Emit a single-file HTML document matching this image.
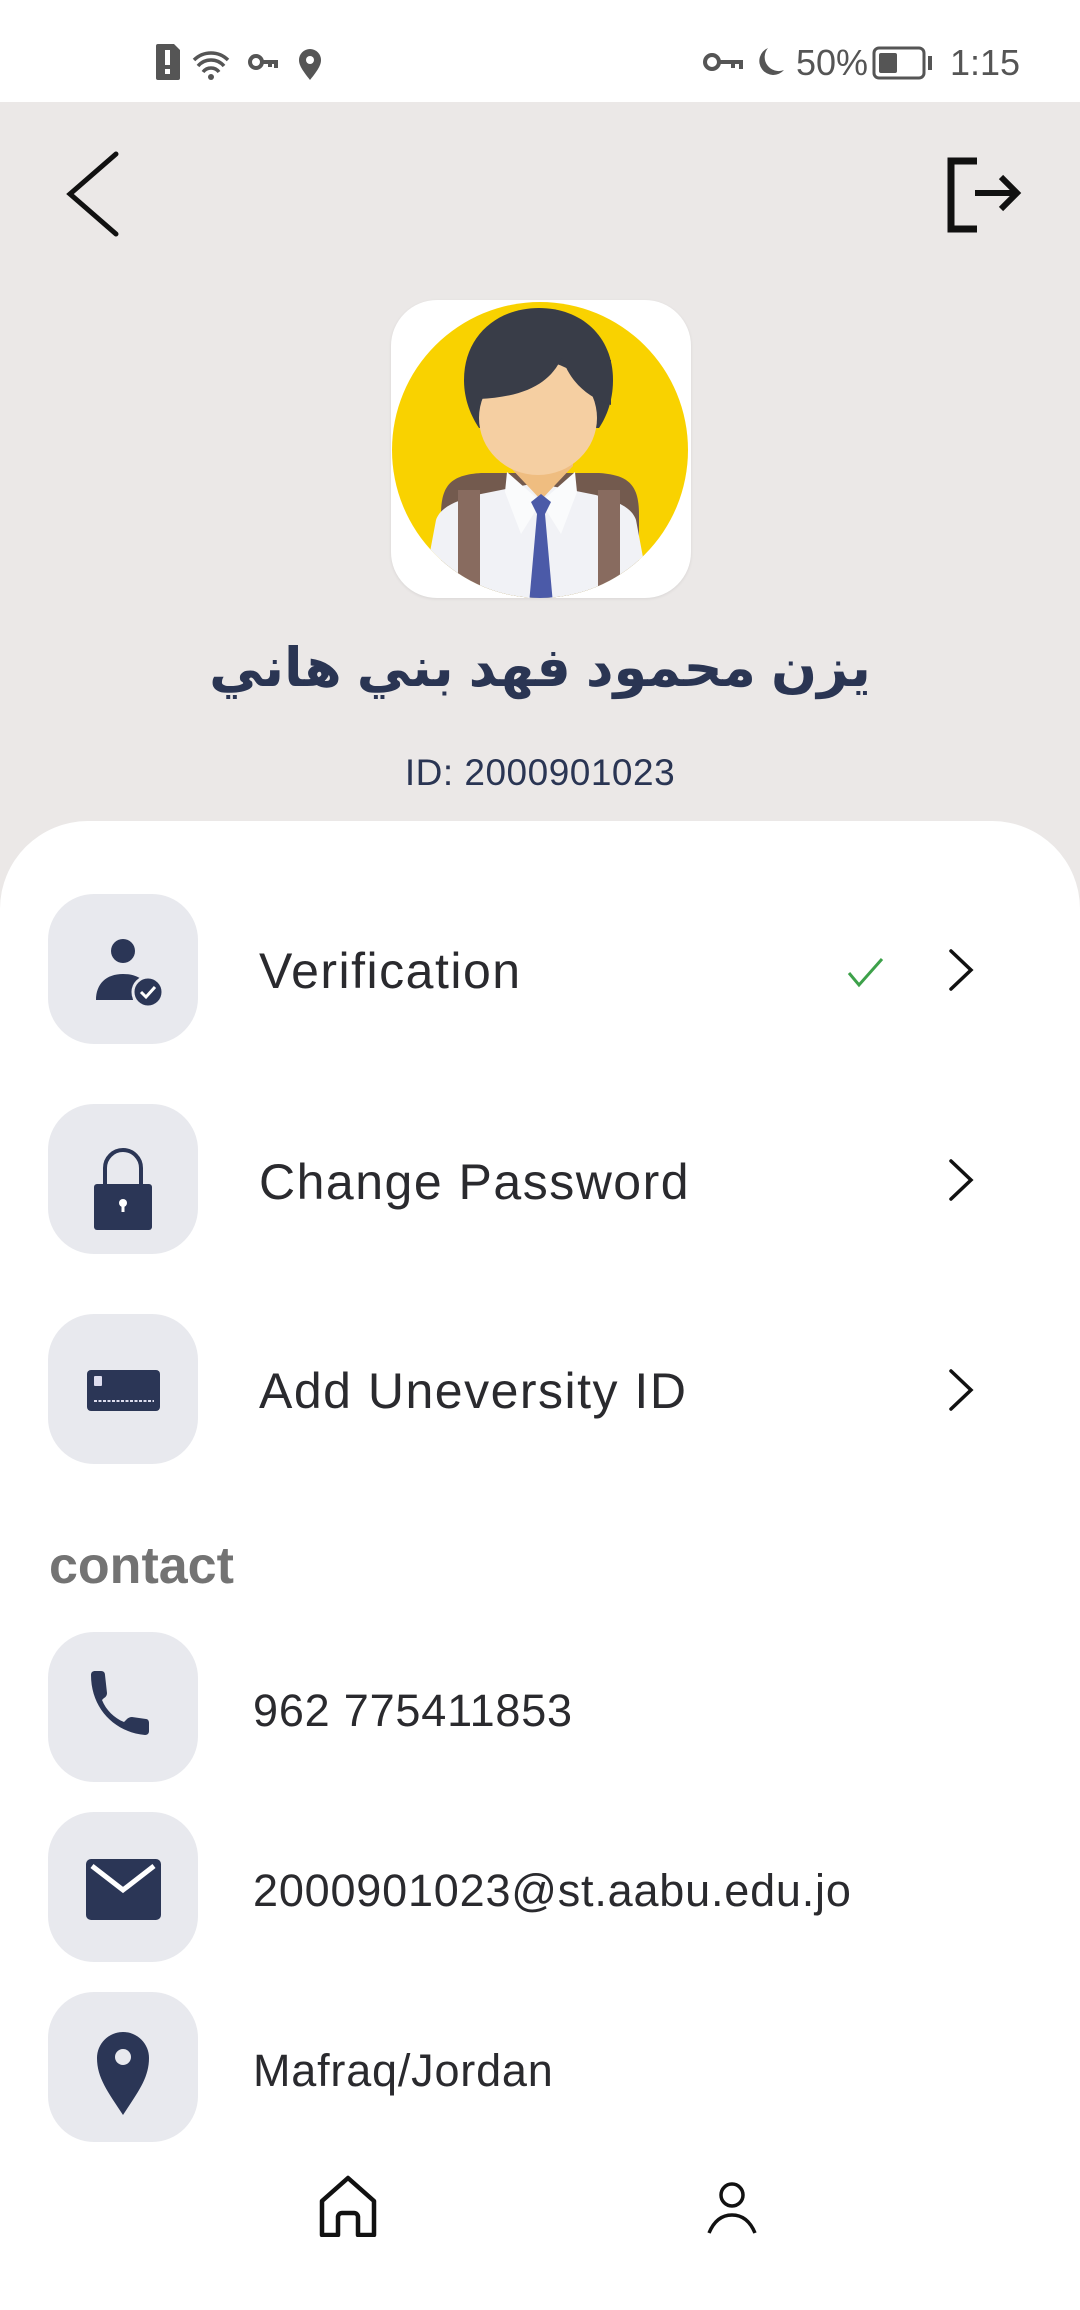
<!DOCTYPE html>
<html><head><meta charset="utf-8"><style>
*{margin:0;padding:0;box-sizing:border-box}
body{width:1080px;height:2310px;background:#fff;position:relative;overflow:hidden;font-family:"Liberation Sans",sans-serif}
.abs{position:absolute}
.top{position:absolute;left:0;top:102px;width:1080px;height:820px;background:#ebe8e7}
.sheet{position:absolute;left:0;top:821px;width:1080px;height:1489px;background:#fff;border-radius:88px 88px 0 0}
.box{position:absolute;left:48px;width:150px;height:150px;border-radius:46px;background:#e8e9ee}
.box svg{position:absolute;left:0;top:0}
.lbl{position:absolute;left:259px;font-size:50px;color:#2a2a2e;letter-spacing:1.5px;line-height:1}
.ct{position:absolute;left:253px;font-size:45px;color:#2a2a2e;letter-spacing:0.8px;line-height:1}
.chev{position:absolute;left:946px}
</style></head><body>
<svg class="abs" style="left:150px;top:40px" width="180" height="44" viewBox="0 0 180 44">
 <path d="M8 4h16l6 6v28a2 2 0 0 1-2 2H8a2 2 0 0 1-2-2V6a2 2 0 0 1 2-2z" fill="#555"/>
 <rect x="15" y="10" width="5" height="15" fill="#fff"/><rect x="15" y="29" width="5" height="5" fill="#fff"/>
 <path d="M44 20a24 24 0 0 1 34 0M48 26a17 17 0 0 1 26 0M53 32a10 10 0 0 1 16 0" stroke="#555" stroke-width="3.5" fill="none"/>
 <circle cx="61" cy="37" r="3" fill="#555"/>
 <circle cx="106" cy="22" r="6" stroke="#555" stroke-width="4" fill="none"/><path d="M112 22h14v6M120 22v5" stroke="#555" stroke-width="4" fill="none"/>
 <path d="M160 40c-8-10-11-15-11-20a11 11 0 0 1 22 0c0 5-3 10-11 20z" fill="#555"/><circle cx="160" cy="20" r="4" fill="#fff"/>
</svg>
<svg class="abs" style="left:700px;top:44px" width="120" height="40" viewBox="0 0 120 40">
 <circle cx="12" cy="18" r="7" stroke="#555" stroke-width="4" fill="none"/><path d="M19 18h22v7M33 18v6" stroke="#555" stroke-width="4" fill="none"/>
 <path d="M68 4a14 14 0 1 0 16 22a14 14 0 0 1-16-22z" fill="#555"/>
</svg>
<div class="abs" style="left:796px;top:42px;font-size:36px;color:#555">50%</div>
<svg class="abs" style="left:872px;top:46px" width="62" height="34" viewBox="0 0 62 34">
 <rect x="2" y="2" width="50" height="30" rx="5" stroke="#555" stroke-width="3" fill="none"/>
 <rect x="7" y="7" width="18" height="20" rx="2" fill="#555"/><rect x="56" y="10" width="4" height="14" fill="#555"/>
</svg>
<div class="abs" style="left:950px;top:42px;font-size:36px;color:#555">1:15</div>

<div class="top"></div>
<svg class="abs" style="left:60px;top:150px" width="70" height="90" viewBox="0 0 70 90">
 <path d="M56 4L10 44l46 40" stroke="#111" stroke-width="5" fill="none" stroke-linecap="round"/>
</svg>
<svg class="abs" style="left:945px;top:155px" width="80" height="80" viewBox="0 0 80 80">
 <path d="M32 6H6v68h26" stroke="#111" stroke-width="7" fill="none"/>
 <path d="M30 38h42M56 22l16 16-16 16" stroke="#111" stroke-width="6" fill="none"/>
</svg>
<div class="abs" style="left:391px;top:300px;width:300px;height:298px;border-radius:46px;background:#fff;overflow:hidden;box-shadow:0 1px 3px rgba(0,0,0,.08)">
<svg width="300" height="298" viewBox="0 0 300 298">
 <defs><clipPath id="c"><ellipse cx="149" cy="150" rx="148" ry="148"/></clipPath></defs>
 <ellipse cx="149" cy="150" rx="148" ry="148" fill="#f9d200"/>
 <g clip-path="url(#c)">
  <path d="M50 215c0-30 10-40 40-42h118c30 2 40 12 40 42v90H50z" fill="#735a4e"/>
  <path d="M30 300l15-80c5-15 25-20 40-25l60-12 60 12c15 5 35 10 40 25l15 80z" fill="#f1f2f6"/>
  <path d="M118 166l32 34 32-34v-10h-64z" fill="#efbd80"/>
  <path d="M116 172l34 30-20 32-16-42zM184 172l-34 30 20 32 16-42z" fill="#fafbfc"/>
  <path d="M140 202l10-8 10 8-6 12 8 90h-24l8-90z" fill="#4b5aa8"/>
  <rect x="67" y="190" width="22" height="110" fill="#886b5f"/>
  <rect x="207" y="190" width="22" height="110" fill="#886b5f"/>
  <path d="M73 80C73 36 106 8 148 8s74 28 74 72c0 20-6 36-14 48H88C80 116 73 100 73 80z" fill="#393d48"/>
  <ellipse cx="147" cy="118" rx="59" ry="57" fill="#f5cfa2"/>
  <path d="M80 60h140v45c-25-8-42-25-49-48-12 28-40 40-83 42H80z" fill="#393d48"/>
 </g>
</svg></div>
<div class="abs" style="left:0;width:1080px;top:636px;text-align:center;font-family:'Liberation Sans','Noto Sans CJK SC','DejaVu Sans',sans-serif;font-weight:bold;font-size:54px;color:#2a3553;direction:rtl">يزن محمود فهد بني هاني</div>
<div class="abs" style="left:0;width:1080px;top:752px;text-align:center;font-size:37px;color:#2a3553;letter-spacing:0.5px">ID: 2000901023</div>

<div class="sheet"></div>
<div class="box" style="top:894px"><svg width="150" height="150" viewBox="0 0 150 150">
 <circle cx="75" cy="57" r="12" fill="#2b3656"/>
 <path d="M48 106c0-16 10-26 27-26 8 0 14 2 18 5a22 22 0 0 0-8 21z" fill="#2b3656"/>
 <circle cx="100" cy="98" r="15" fill="#2b3656" stroke="#e8e9ee" stroke-width="3"/>
 <path d="M93 98l5 5 9-10" stroke="#fff" stroke-width="3" fill="none"/>
</svg></div>
<div class="lbl" style="top:946px">Verification</div>
<svg class="abs" style="left:846px;top:955px" width="40" height="34" viewBox="0 0 40 34"><path d="M3 18l10 12L36 4" stroke="#3da14a" stroke-width="3" fill="none"/></svg>
<svg class="chev" style="top:948px" width="30" height="44" viewBox="0 0 30 44"><path d="M5 3l20 19L5 41" stroke="#111" stroke-width="3.5" fill="none" stroke-linecap="round"/></svg>

<div class="box" style="top:1104px"><svg width="150" height="150" viewBox="0 0 150 150">
 <path d="M57 82V64a18 18 0 0 1 36 0v18" stroke="#2b3656" stroke-width="4" fill="none"/>
 <rect x="46" y="80" width="58" height="46" rx="3" fill="#2b3656"/>
 <circle cx="75" cy="99" r="4" fill="#fff"/><rect x="73.5" y="99" width="3" height="9" fill="#fff"/>
</svg></div>
<div class="lbl" style="top:1157px">Change Password</div>
<svg class="chev" style="top:1158px" width="30" height="44" viewBox="0 0 30 44"><path d="M5 3l20 19L5 41" stroke="#111" stroke-width="3.5" fill="none" stroke-linecap="round"/></svg>

<div class="box" style="top:1314px"><svg width="150" height="150" viewBox="0 0 150 150">
 <rect x="39" y="56" width="73" height="41" rx="4" fill="#2b3656"/>
 <rect x="46" y="62" width="8" height="10" fill="#dde" rx="1"/>
 <path d="M46 87h60" stroke="#dde" stroke-width="2" stroke-dasharray="3 1.5"/>
</svg></div>
<div class="lbl" style="top:1366px">Add Uneversity ID</div>
<svg class="chev" style="top:1368px" width="30" height="44" viewBox="0 0 30 44"><path d="M5 3l20 19L5 41" stroke="#111" stroke-width="3.5" fill="none" stroke-linecap="round"/></svg>

<div class="abs" style="left:49px;top:1540px;font-size:52px;font-weight:bold;color:#737373;line-height:1">contact</div>

<div class="box" style="top:1632px"><svg width="150" height="150" viewBox="0 0 150 150">
 <path d="M43 43c0-3 2-4 4-4h6c3 0 4 2 4 4l2 18c0 2-1 4-3 5l-2 2c4 10 12 18 22 22l3-3c1-1 3-2 5-2l14 2c2 0 3 2 3 4v8c0 2-1 4-4 4C66 100 43 76 43 43z" fill="#2b3656"/>
</svg></div>
<div class="ct" style="top:1688px">962 775411853</div>

<div class="box" style="top:1812px"><svg width="150" height="150" viewBox="0 0 150 150">
 <rect x="38" y="47" width="75" height="61" rx="5" fill="#2b3656"/>
 <path d="M44 54l31 24 31-24" stroke="#fff" stroke-width="5" fill="none"/>
</svg></div>
<div class="ct" style="top:1868px">2000901023@st.aabu.edu.jo</div>

<div class="box" style="top:1992px"><svg width="150" height="150" viewBox="0 0 150 150">
 <path d="M75 123C60 100 49 86 49 66a26 26 0 0 1 52 0c0 20-11 34-26 57z" fill="#2b3656"/>
 <circle cx="75" cy="65" r="8" fill="#e8e9ee"/>
</svg></div>
<div class="ct" style="top:2048px">Mafraq/Jordan</div>

<svg class="abs" style="left:318px;top:2175px" width="60" height="62" viewBox="0 0 60 62">
 <path d="M4 60V26L30 3l26 23v34H40V42a4 4 0 0 0-4-4H24a4 4 0 0 0-4 4v18z" stroke="#111" stroke-width="4.5" fill="none" stroke-linejoin="round"/>
</svg>
<svg class="abs" style="left:706px;top:2181px" width="52" height="56" viewBox="0 0 52 56">
 <circle cx="26" cy="14" r="11" stroke="#111" stroke-width="3.5" fill="none"/>
 <path d="M3 52c5-12 13-18 23-18s18 6 23 18" stroke="#111" stroke-width="3.5" fill="none"/>
</svg>
</body></html>
